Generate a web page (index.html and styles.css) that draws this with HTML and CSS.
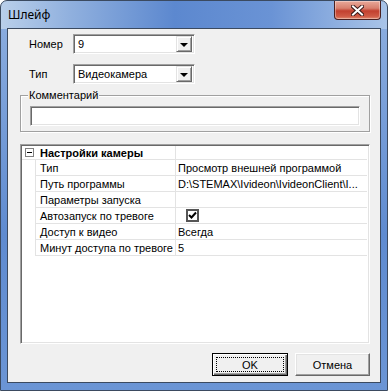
FILE: index.html
```html
<!DOCTYPE html>
<html lang="ru">
<head>
    <meta charset="UTF-8">
    <title>Шлейф</title>
    <link rel="stylesheet" href="styles.css">
</head>
<body>
<div class="window">
    <!-- заголовок окна -->
    <div class="titlebar">
        <span class="title">Шлейф</span>
        <div class="close">
            <svg width="13" height="11" viewBox="0 0 13 11">
                <path d="M2 1.5 L11 9.5 M11 1.5 L2 9.5" stroke="#3a1a1a" stroke-width="4" stroke-linecap="square"/>
                <path d="M2 1.5 L11 9.5 M11 1.5 L2 9.5" stroke="#fff" stroke-width="2" stroke-linecap="square"/>
            </svg>
        </div>
    </div>

    <div class="client">
        <div class="field">
            <span class="label">Номер</span>
            <div class="combo">
                <span class="combo-text">9</span>
                <span class="combo-btn"><span class="arrow"></span></span>
            </div>
        </div>
        <div class="field">
            <span class="label">Тип</span>
            <div class="combo">
                <span class="combo-text">Видеокамера</span>
                <span class="combo-btn"><span class="arrow"></span></span>
            </div>
        </div>

        <div class="group">
            <span class="group-title">Комментарий</span>
            <div class="edit"></div>
        </div>

        <!-- таблица свойств -->
        <div class="grid">
            <div class="row head">
                <span class="gutter"><span class="expand"></span></span>
                <span class="name">Настройки камеры</span>
                <span class="value"></span>
            </div>
            <div class="row">
                <span class="gutter"></span>
                <span class="name">Тип</span>
                <span class="value">Просмотр внешней программой</span>
            </div>
            <div class="row">
                <span class="gutter"></span>
                <span class="name">Путь программы</span>
                <span class="value">D:\STEMAX\Ivideon\IvideonClient\I...</span>
            </div>
            <div class="row">
                <span class="gutter"></span>
                <span class="name">Параметры запуска</span>
                <span class="value"></span>
            </div>
            <div class="row">
                <span class="gutter"></span>
                <span class="name">Автозапуск по тревоге</span>
                <span class="value">
                    <span class="check">
                        <svg width="9" height="9" viewBox="0 0 9 9">
                            <path d="M1 4 L3.5 6.5 L8 1.5" stroke="#000" stroke-width="2" fill="none"/>
                        </svg>
                    </span>
                </span>
            </div>
            <div class="row">
                <span class="gutter"></span>
                <span class="name">Доступ к видео</span>
                <span class="value">Всегда</span>
            </div>
            <div class="row">
                <span class="gutter"></span>
                <span class="name">Минут доступа по тревоге</span>
                <span class="value">5</span>
            </div>
        </div>

        <div class="buttons">
            <div class="btn default"><span class="focus">OK</span></div>
            <div class="btn">Отмена</div>
        </div>
    </div>
</div>
</body>
</html>
```

FILE: styles.css
```css
*{
    box-sizing: border-box;
    margin:0;
    padding:0;
}
body{
    background:#fff;
    font-family: "Liberation Sans", Arial, sans-serif;
    font-size:11px;
    color:#000;
}
.window{
    width:388px;
    height:391px;
    border:1px solid #3b4a60;
    border-radius:7px 7px 0 0;
    background:
        linear-gradient(90deg, #b9cfea 0%, #90b0de 18%, #5c88cf 45%, #6a93d5 70%, #a9c4e8 100%) top / 100% 28px no-repeat,
        linear-gradient(180deg, #8fb0e0 0%, #5f8bd0 60%, #6b95d5 100%);
    display:flex;
    flex-direction:column;
    padding:0 6px 7px 6px;
}
.titlebar{
    height:27px;
    display:flex;
    justify-content:space-between;
    align-items:flex-start;
}
.title{
    font-family: "Noto Sans", "DejaVu Sans", sans-serif;
    font-size:12px;
    line-height:16px;
    padding:6px 0 0 1px;
}
.close{
    width:47px;
    height:19px;
    border:1px solid #4a2020;
    border-top:none;
    border-radius:0 0 4px 4px;
    background: linear-gradient(180deg, #e9a99a 0%, #d8806e 40%, #c2402f 55%, #cf5a45 85%, #e08a70 100%);
    display:flex;
    align-items:center;
    justify-content:center;
    box-shadow: inset 0 0 0 1px rgba(255,255,255,0.35);
}
.client{
    flex:1;
    border:1px solid #3b4a60;
    background:#f0f0f0;
    padding:5px 10px 0 12px;
    display:flex;
    flex-direction:column;
}

/* поля с выпадающим списком */
.field{
    display:flex;
    align-items:center;
    height:20px;
}
.field + .field{
    margin-top:10px;
}
.label{
    width:53px;
    padding-left:9px;
}
.combo{
    width:122px;
    height:20px;
    background:#fff;
    border:1px solid;
    border-color:#a0a0a0 #fff #fff #a0a0a0;
    box-shadow: inset 1px 1px 0 #696969, inset -1px -1px 0 #e3e3e3;
    display:flex;
    align-items:center;
    padding:2px;
}
.combo-text{
    flex:1;
    padding-left:2px;
}
.combo-btn{
    width:16px;
    height:16px;
    background:#f0f0f0;
    border:1px solid;
    border-color:#e3e3e3 #696969 #696969 #e3e3e3;
    box-shadow: inset 1px 1px 0 #fff, inset -1px -1px 0 #a0a0a0;
    display:flex;
    align-items:center;
    justify-content:center;
}
.arrow{
    width:0;
    height:0;
    border-left:4px solid transparent;
    border-right:4px solid transparent;
    border-top:4px solid #000;
    margin-top:1px;
}

/* группа Комментарий */
.group{
    margin-top:11px;
    height:37px;
    border:1px solid #a0a0a0;
    box-shadow: 1px 1px 0 #fff, inset 1px 1px 0 #fff;
    padding:0 9px;
}
.group-title{
    display:block;
    width:fit-content;
    margin:-7px 0 0 -2px;
    padding:0 1px;
    line-height:13px;
    background:#f0f0f0;
}
.edit{
    margin-top:4px;
    height:20px;
    background:#fff;
    border:1px solid;
    border-color:#a0a0a0 #fff #fff #a0a0a0;
    box-shadow: inset 1px 1px 0 #696969, inset -1px -1px 0 #e3e3e3;
}

/* таблица свойств */
.grid{
    margin-top:12px;
    height:200px;
    background:#fff;
    border:1px solid;
    border-color:#a0a0a0 #fff #fff #a0a0a0;
    box-shadow: inset 1px 1px 0 #696969, inset -1px -1px 0 #e3e3e3;
    padding:1px 2px 0 1px;
}
.row{
    display:grid;
    grid-template-columns:13px 141px 1fr;
    height:16px;
}
.row span{
    display:flex;
    align-items:center;
}
.row .name,
.row .value{
    border-bottom:1px solid #e3e3e3;
    white-space:nowrap;
    overflow:hidden;
}
.row .name{
    border-left:1px solid #e3e3e3;
    border-right:1px solid #e3e3e3;
    padding-left:4px;
}
.row .value{
    padding-left:2px;
}
.row.head{
    height:14px;
}
.row.head .name{
    border-left:none;
    padding-left:5px;
    font-weight:bold;
}
.row.head .gutter{
    border-bottom:1px solid #e3e3e3;
    justify-content:flex-end;
    padding-right:1px;
}
.expand{
    width:9px;
    height:9px;
    border:1px solid #808080;
    background:#fff;
    position:relative;
}
.expand::after{
    content:"";
    position:absolute;
    left:1px;
    top:3px;
    width:5px;
    height:1px;
    background:#000;
}
.check{
    width:13px;
    height:13px;
    margin-left:8px;
    border:2px solid #555;
    background:#fff;
    justify-content:center;
}

/* кнопки */
.buttons{
    margin-top:9px;
    display:flex;
    justify-content:flex-end;
    gap:7px;
}
.btn{
    width:75px;
    height:23px;
    background:#f0f0f0;
    border:1px solid;
    border-color:#fff #696969 #696969 #fff;
    box-shadow: inset -1px -1px 0 #a0a0a0, inset 1px 1px 0 #e3e3e3;
    display:flex;
    align-items:center;
    justify-content:center;
}
.btn.default{
    width:76px;
    border:1px solid #000;
    box-shadow: inset 1px 1px 0 #fff, inset -1px -1px 0 #696969, inset -2px -2px 0 #a0a0a0;
    padding:3px;
}
.focus{
    flex:1;
    align-self:stretch;
    border:1px dotted #000;
    display:flex;
    align-items:center;
    justify-content:center;
}
```
